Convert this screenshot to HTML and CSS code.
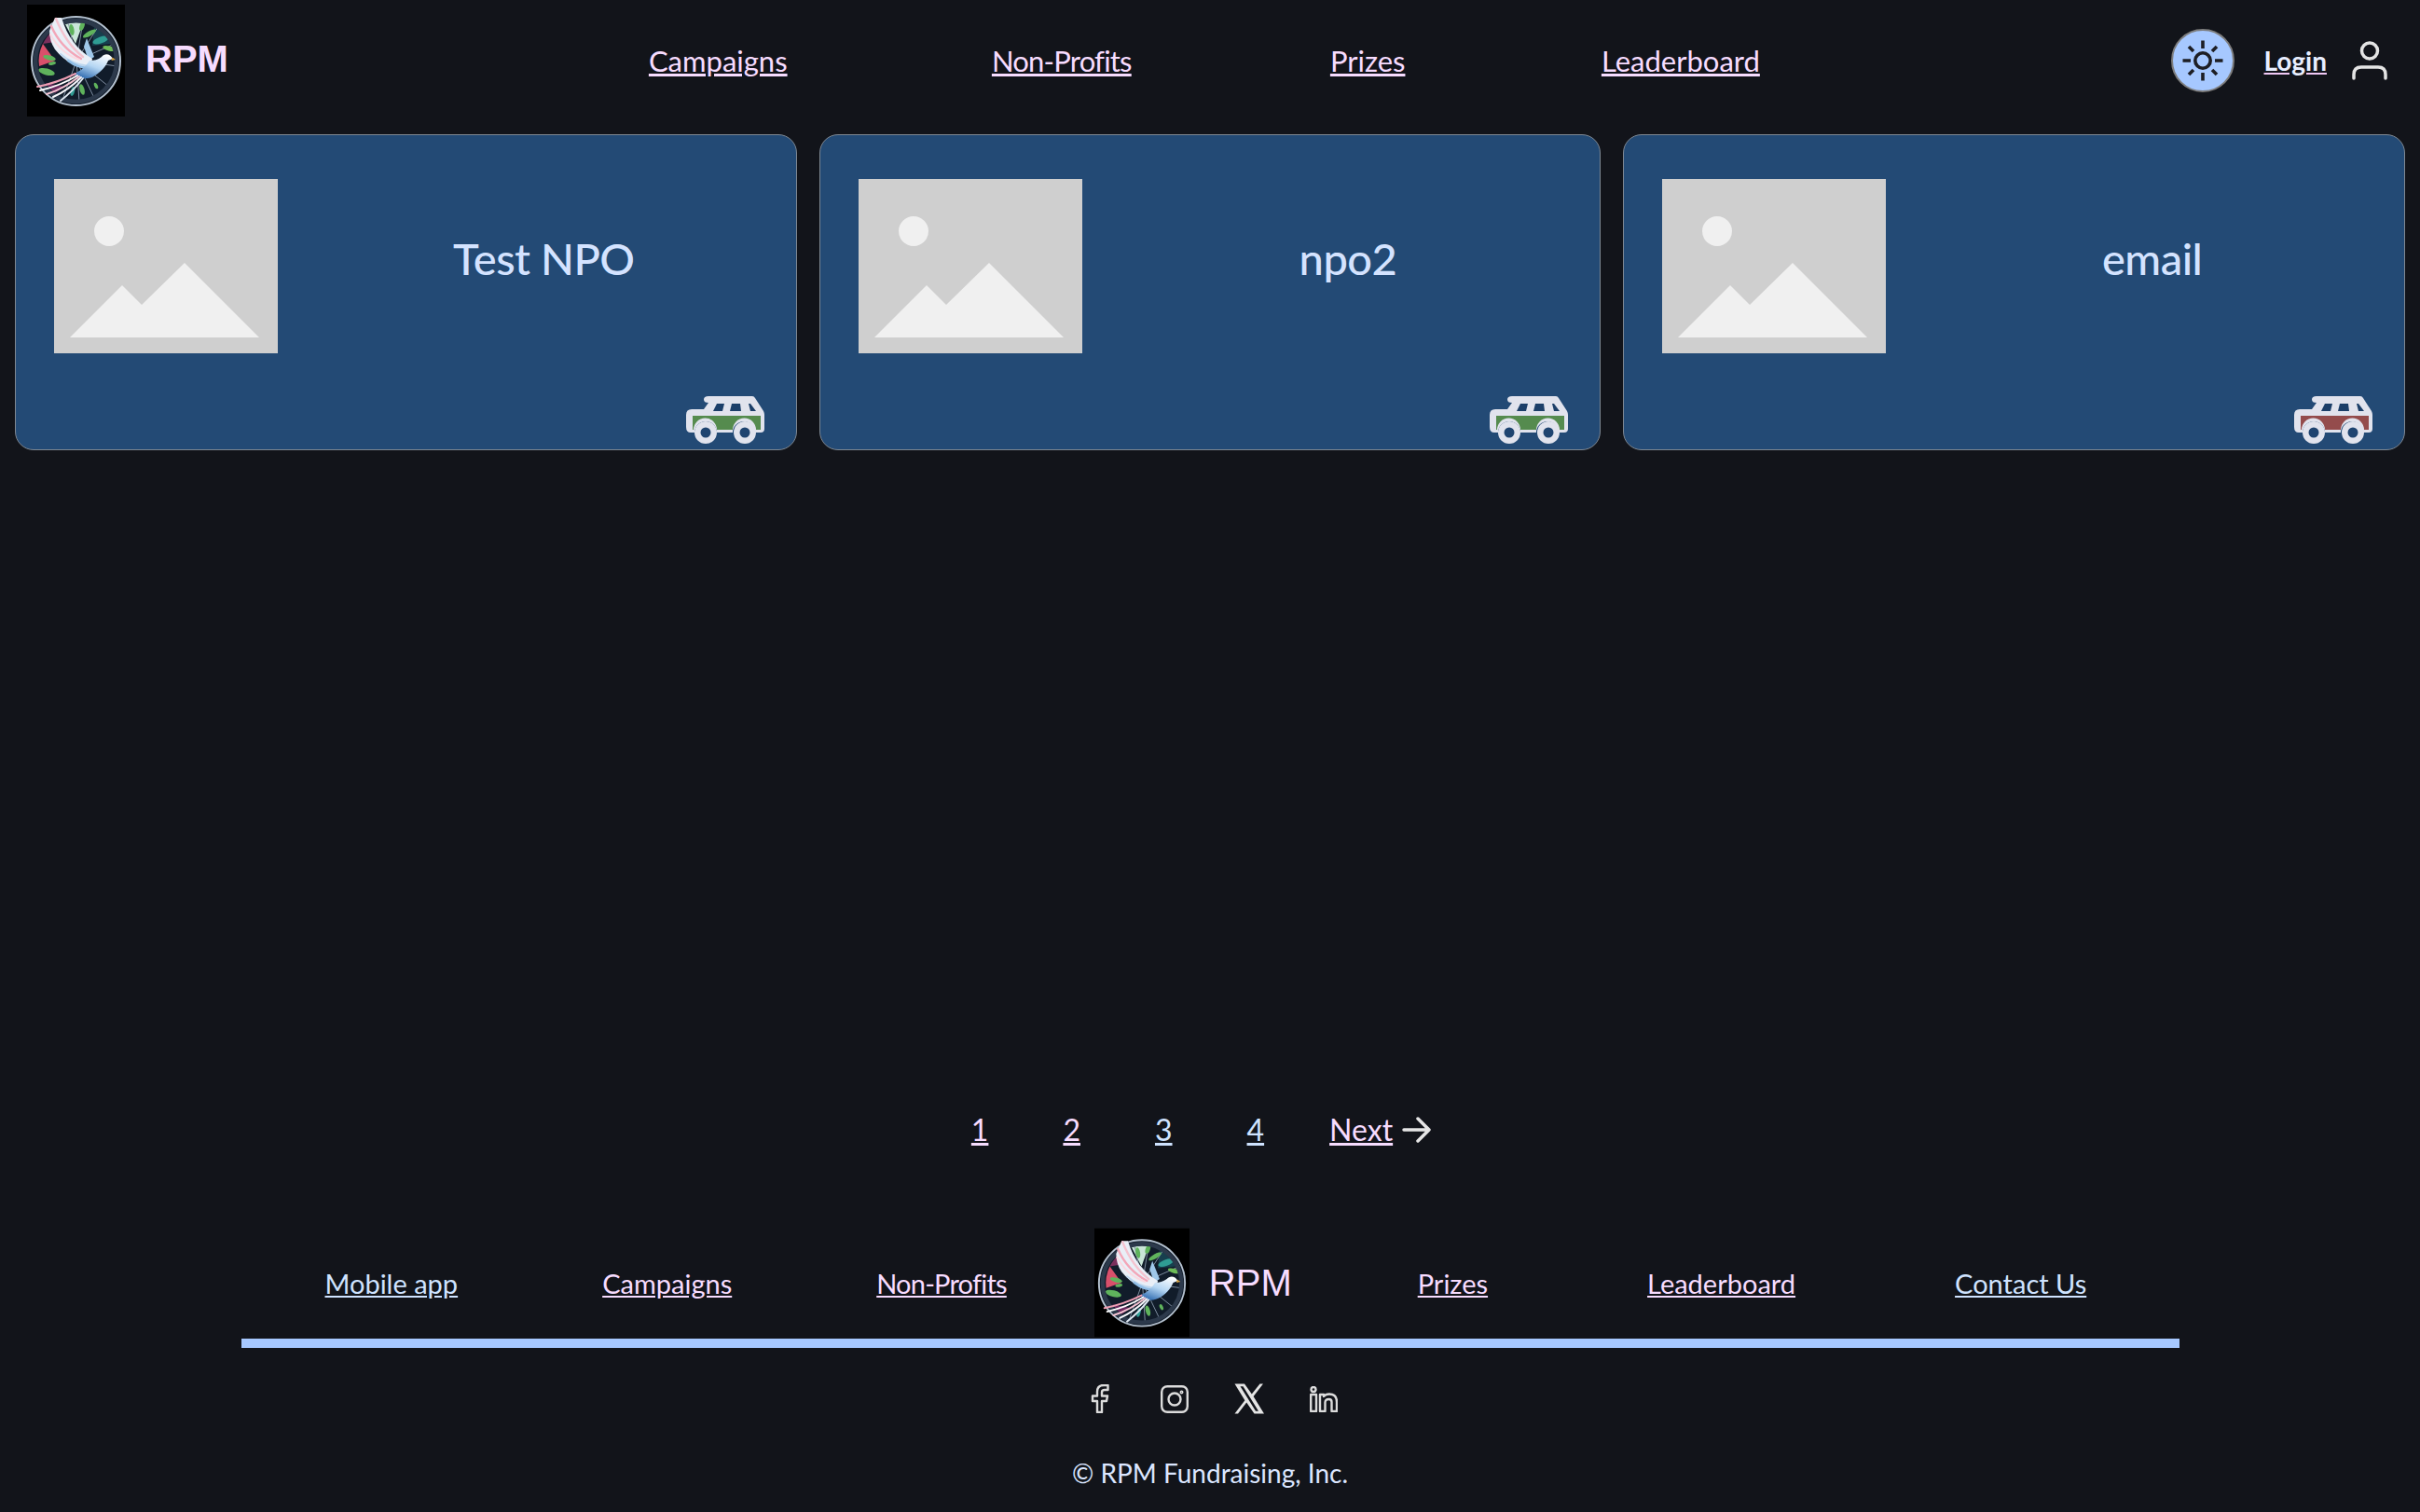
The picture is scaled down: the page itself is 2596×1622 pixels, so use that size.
FILE: index.html
```html
<!DOCTYPE html>
<html lang="en">
<head>
  <meta charset="UTF-8">
  <meta name="viewport" content="width=device-width, initial-scale=1.0">
  <title>RPM</title>
  <link rel="stylesheet" href="styles.css">
</head>
<body>
  <svg class="defs" width="0" height="0" aria-hidden="true">
    <defs>
      <linearGradient id="dove-body" x1="0.8" y1="0" x2="0.2" y2="1">
        <stop offset="0" stop-color="#ffffff"/>
        <stop offset="0.5" stop-color="#b5d6f3"/>
        <stop offset="1" stop-color="#2a67ad"/>
      </linearGradient>
      <symbol id="logo" viewBox="0 0 105 120">
        <rect width="105" height="120" fill="#000"/>
        <circle cx="52.5" cy="60.5" r="47" fill="#111c2a"/>
        <path d="M30 60 L13 66 A41 41 0 0 1 17 42 Z" fill="#d9506b"/>
        <path d="M30 40 L17 42 A41 41 0 0 1 28 28 Z" fill="#7a2f5c"/>
        <path d="M40 88 L30 95 A41 41 0 0 1 20 84 Z" fill="#6b2a5e"/>
        <path d="M52 42 L41 21 A41 41 0 0 1 60 20 Z" fill="#c9e6d8"/>
        <path d="M70 44 L72 24 A41 41 0 0 1 90 42 Z" fill="#173f4e"/>
        <g stroke="#7f8ea1" stroke-width="1">
          <line x1="53" y1="60" x2="44" y2="18"/>
          <line x1="53" y1="60" x2="60" y2="18"/>
          <line x1="53" y1="60" x2="76" y2="24"/>
          <line x1="53" y1="60" x2="94" y2="42"/>
          <line x1="53" y1="60" x2="97" y2="66"/>
          <line x1="53" y1="60" x2="88" y2="88"/>
          <line x1="53" y1="60" x2="72" y2="100"/>
          <line x1="53" y1="60" x2="56" y2="104"/>
          <line x1="53" y1="60" x2="38" y2="102"/>
        </g>
        <g fill="#5fb35c">
          <ellipse cx="24" cy="57" rx="7" ry="2.5" transform="rotate(15 24 57)"/>
          <ellipse cx="21" cy="72" rx="9" ry="3.5" transform="rotate(15 21 72)"/>
          <ellipse cx="27" cy="63" rx="4" ry="1.8" transform="rotate(-10 27 63)"/>
          <ellipse cx="48" cy="27" rx="2.5" ry="6" transform="rotate(-10 48 27)"/>
          <ellipse cx="59" cy="23" rx="2.5" ry="5" transform="rotate(20 59 23)"/>
          <ellipse cx="67" cy="31" rx="8" ry="2.5" transform="rotate(-30 67 31)"/>
          <ellipse cx="59" cy="91" rx="2.5" ry="6" transform="rotate(-15 59 91)"/>
          <ellipse cx="74" cy="87" rx="1.8" ry="3.5" transform="rotate(-25 74 87)"/>
        </g>
        <g fill="#2f9c93">
          <ellipse cx="79" cy="38" rx="9" ry="3.5" transform="rotate(-20 79 38)"/>
          <ellipse cx="49" cy="93" rx="2" ry="5" transform="rotate(15 49 93)"/>
        </g>
        <ellipse cx="88" cy="47" rx="7" ry="2.5" fill="#6dbb57" transform="rotate(15 88 47)"/>
        <circle cx="52.5" cy="60.5" r="47.5" fill="none" stroke="#b4c1cf" stroke-width="2"/>
        <circle cx="52.5" cy="60.5" r="43.5" fill="none" stroke="#2c394b" stroke-width="4.5"/>
        <path d="M61 45 L64 36 L72 56 L66 60 Z" fill="#9fc8ea"/>
        <path d="M68 68 Q46 68 30 48 Q24 39 24 28 L30 14 L37 14 Q46 44 70 58 Z" fill="#e9eff7"/>
        <g fill="none" stroke-linecap="round">
          <path d="M60 56 Q42 42 31 15" stroke="#f4c3cf" stroke-width="2.4"/>
          <path d="M58 58 Q36 46 26 23" stroke="#f3a6b8" stroke-width="2.4"/>
          <path d="M56 59 Q36 52 25 32" stroke="#fbd9e1" stroke-width="2"/>
          <path d="M66 66 Q48 64 36 53" stroke="#bcd6ee" stroke-width="2"/>
          <path d="M68 68 Q54 68 44 60" stroke="#8fbde6" stroke-width="2.6"/>
        </g>
        <path d="M92 58 C89 52 83 52 80 56 C76 59 72 60 67 60 C62 68 56 72 50 74 C54 80 66 81 73 76 C81 71 85 65 87 60 Z" fill="url(#dove-body)"/>
        <path d="M91.5 56.5 L95 59 L90.5 60 Z" fill="#d9a441"/>
        <g fill="none" stroke-linecap="round" stroke-width="2">
          <path d="M52 74 Q32 84 11 88" stroke="#ef9fb4"/>
          <path d="M54 76 Q36 87 14 92" stroke="#ffffff"/>
          <path d="M56 77 Q40 90 21 96" stroke="#f6c4d2"/>
          <path d="M58 78 Q44 92 28 99" stroke="#f6f6fa"/>
          <path d="M60 79 Q50 92 36 103" stroke="#dfe8f2"/>
        </g>
      </symbol>
      <symbol id="placeholder" viewBox="0 0 240 187">
        <rect width="240" height="187" fill="#cfcfcf"/>
        <circle cx="59" cy="56" r="16" fill="#f0f0f0"/>
        <path d="M17 170 L73 114 L94 135 L140 90 L220 170 Z" fill="#f0f0f0"/>
      </symbol>
      <symbol id="car" viewBox="0 0 84 51">
        <path d="M24 0 H71 Q73 0 74 2 L83 16 Q84 18 84 20 V35 Q84 39 80 39 H74 A12 12 0 0 0 50 39 H33 A12 12 0 0 0 9 39 H5 Q0 39 0 33 V20 Q0 14 6 14 H19 L24 7 H24 Q19 7 19 3.5 Q19 0 24 0 Z" fill="#e1e3ed"/>
        <path class="car-paint" d="M7 21 H80 V36 H75 A12.5 12.5 0 0 0 50 36 H33 A12.5 12.5 0 0 0 8 36 H7 Z"/>
        <circle cx="21" cy="39" r="12" fill="#e1e3ed"/>
        <circle cx="63" cy="39" r="12" fill="#e1e3ed"/>
        <circle cx="21" cy="39" r="5.5" fill="#1f4470"/>
        <circle cx="63" cy="39" r="5.5" fill="#1f4470"/>
        <path d="M33 8 H41 L39 16 H29 Z M49 8 H58 L59 16 H47 Z M67 8 H69 L75 16 H69 Z" fill="#1c3f69"/>
      </symbol>
    </defs>
  </svg>

  <header class="topbar">
    <a class="brand" href="#">
      <svg class="logo"><use href="#logo"/></svg>
      <span class="brand-name">RPM</span>
    </a>
    <nav class="main-nav">
      <a href="#">Campaigns</a>
      <a class="tight" href="#">Non-Profits</a>
      <a href="#">Prizes</a>
      <a href="#">Leaderboard</a>
    </nav>
    <div class="account">
      <button class="theme-toggle" type="button" aria-label="Theme">
        <svg width="52" height="52" viewBox="0 0 52 52" fill="none" stroke="#1d1e24" stroke-width="3.6">
          <circle cx="26" cy="26" r="8.2"/>
          <path d="M26 4.5 V13 M26 39 V47.5 M4.5 26 H13 M39 26 H47.5 M11 11 L16 16 M36 36 L41 41 M11 41 L16 36 M36 16 L41 11"/>
        </svg>
      </button>
      <a class="login" href="#">Login</a>
      <svg class="user-icon" width="38" height="42" viewBox="0 0 38 42" fill="none" stroke="#e4e4e4" stroke-width="3.5" stroke-linecap="round">
        <circle cx="19" cy="10.5" r="8.5"/>
        <path d="M2 40 V36 Q2 28 10 28 H28 Q36 28 36 36 V40"/>
      </svg>
    </div>
  </header>

  <main class="npo-grid">
    <article class="npo-card">
      <svg class="npo-image"><use href="#placeholder"/></svg>
      <h2>Test NPO</h2>
      <svg class="car car-green" width="84" height="51"><use href="#car"/></svg>
    </article>
    <article class="npo-card">
      <svg class="npo-image"><use href="#placeholder"/></svg>
      <h2>npo2</h2>
      <svg class="car car-green" width="84" height="51"><use href="#car"/></svg>
    </article>
    <article class="npo-card">
      <svg class="npo-image"><use href="#placeholder"/></svg>
      <h2>email</h2>
      <svg class="car car-red" width="84" height="51"><use href="#car"/></svg>
    </article>
  </main>

  <nav class="pagination">
    <a href="#">1</a>
    <a href="#">2</a>
    <a class="blue" href="#">3</a>
    <a class="blue" href="#">4</a>
    <span class="next">
      <a href="#">Next</a>
      <svg width="32" height="30" viewBox="0 0 32 30" fill="none" stroke="#e6e6e6" stroke-width="3.5" stroke-linecap="round" stroke-linejoin="round">
        <path d="M2 15 H29 M17 3 L29 15 L17 27"/>
      </svg>
    </span>
  </nav>

  <footer class="site-footer">
    <div class="footer-nav">
      <a class="blue" href="#">Mobile app</a>
      <a href="#">Campaigns</a>
      <a class="tight" href="#">Non-Profits</a>
      <span class="footer-brand">
        <svg class="logo logo-small"><use href="#logo"/></svg>
        <span class="brand-name-light">RPM</span>
      </span>
      <a href="#">Prizes</a>
      <a class="wide" href="#">Leaderboard</a>
      <a class="wide blue" href="#">Contact Us</a>
    </div>
    <div class="socials">
      <svg width="20" height="31" viewBox="0 0 20 31" fill="none" stroke="#dcdcdc" stroke-width="2.4" stroke-linejoin="round">
        <path d="M7 30 H12 V18 H17 L18 12.5 H12 V8.5 Q12 6 15 6 H18.5 V1 H14 Q7 1 7 8 V12.5 H2 V18 H7 Z"/>
      </svg>
      <svg width="30" height="30" viewBox="0 0 30 30" fill="none" stroke="#dcdcdc" stroke-width="2.4">
        <rect x="1.2" y="1.2" width="27.6" height="27.6" rx="6"/>
        <circle cx="15" cy="15" r="6.5"/>
        <circle cx="22.5" cy="7.5" r="0.8"/>
      </svg>
      <svg width="32" height="33" viewBox="0 0 32 33" fill="#e4e4e4">
        <path fill-rule="evenodd" d="M0.5 0.5 H11 L18.8 11.6 L27.5 0.5 H31 L20.6 14 L32 32.5 H21.5 L13.2 20.6 L4 32.5 H0.5 L11.4 18.2 Z M6.5 3.2 L23 29.8 H26 L9.5 3.2 Z"/>
      </svg>
      <svg width="30" height="28" viewBox="0 0 30 28" fill="none" stroke="#dcdcdc" stroke-width="2.4" stroke-linejoin="round">
        <circle cx="4" cy="3.5" r="2.5"/>
        <path d="M1.2 9 H7 V27 H1.2 Z"/>
        <path d="M11 27 V9 H15 V11 Q17 8.5 21 8.5 Q29 8.5 29 17 V27 H23.5 V17 Q23.5 14 20.5 14 Q16.5 14 16.5 17.5 V27 Z"/>
      </svg>
    </div>
    <p class="copyright">© RPM Fundraising, Inc.</p>
  </footer>
</body>
</html>
```

FILE: styles.css
```css
html, body {
  margin: 0;
  background-color: #12141a;
}
body {
  font-family: "Lato", sans-serif;
  font-variant-ligatures: none;
  height: 1622px;
  overflow: hidden;
}
a {
  color: #f7dcff;
}
a.blue {
  color: #cfe3ff;
}
a.tight {
  letter-spacing: -0.8px;
}
.defs {
  position: absolute;
}

/* top bar */
.topbar {
  display: flex;
  align-items: center;
  height: 130px;
  padding: 0 35px 0 29px;
  margin-bottom: 14px;
}
.brand {
  display: flex;
  align-items: center;
  gap: 22px;
  text-decoration: none;
}
.logo {
  flex: none;
  width: 105px;
  height: 120px;
}
.logo-small {
  width: 102px;
}
.brand-name {
  font-family: "Liberation Sans", sans-serif;
  font-weight: 700;
  font-size: 40px;
  margin-bottom: 4px;
}
.main-nav {
  display: grid;
  grid-template-columns: 368px 363px 291px auto;
  margin-left: 451px;
  font-size: 31px;
}
.main-nav a {
  justify-self: start;
}
.account {
  display: flex;
  align-items: center;
  margin-left: auto;
}
.theme-toggle {
  display: flex;
  align-items: center;
  justify-content: center;
  width: 68px;
  height: 68px;
  padding: 0;
  border: 2px solid #7d7d7d;
  border-radius: 50%;
  background-color: #a6c8ff;
}
.login {
  margin: 0 27px 0 32px;
  font-size: 28px;
  font-weight: 700;
  color: #e8eeff;
  text-decoration-color: #f0c8f5;
}

/* cards */
.npo-grid {
  display: grid;
  grid-template-columns: repeat(3, 1fr);
  gap: 24px;
  padding: 0 16px;
}
.npo-card {
  position: relative;
  display: flex;
  height: 339px;
  box-sizing: border-box;
  padding: 47px 41px;
  background-color: #234a75;
  border: 1px solid #7f8892;
  border-radius: 20px;
}
.npo-image {
  flex: none;
  width: 240px;
  height: 187px;
}
.npo-card h2 {
  flex: 1;
  margin: 57px 0 0;
  padding-left: 56px;
  text-align: center;
  font-size: 47px;
  font-weight: 500;
  letter-spacing: -0.5px;
  color: #d4e3ff;
}
.car {
  position: absolute;
  right: 34px;
  bottom: 6px;
}
.car-green {
  --car-fill: #558b4e;
}
.car-red {
  --car-fill: #944c4c;
}
.car-paint {
  fill: var(--car-fill);
}

/* pagination */
.pagination {
  display: flex;
  justify-content: center;
  align-items: center;
  gap: 80px;
  margin-top: 709px;
  padding-right: 18px;
  font-size: 32px;
}
.next {
  display: flex;
  align-items: center;
  gap: 10px;
  margin-left: -10px;
}

/* footer */
.site-footer {
  margin-top: 85px;
  text-align: center;
}
.footer-nav {
  display: flex;
  align-items: center;
  width: 2079px;
  box-sizing: border-box;
  margin: 0 auto;
  padding-left: 90px;
  border-bottom: 10px solid #a6c8ff;
  font-size: 29px;
}
.footer-nav a + a {
  margin-left: 155px;
}
.footer-nav a.wide {
  margin-left: 171px;
}
.footer-brand {
  display: flex;
  align-items: center;
  gap: 21px;
  margin: 0 135px 0 94px;
}
.brand-name-light {
  font-family: "Liberation Sans", sans-serif;
  font-size: 40px;
  color: #f7dcff;
}
.socials {
  display: grid;
  grid-template-columns: repeat(4, 80px);
  justify-content: center;
  justify-items: center;
  align-items: center;
  margin-top: 38px;
  padding-left: 3px;
}
.copyright {
  margin: 46px 0 0;
  font-size: 28px;
  color: #dbe6ff;
}
```
